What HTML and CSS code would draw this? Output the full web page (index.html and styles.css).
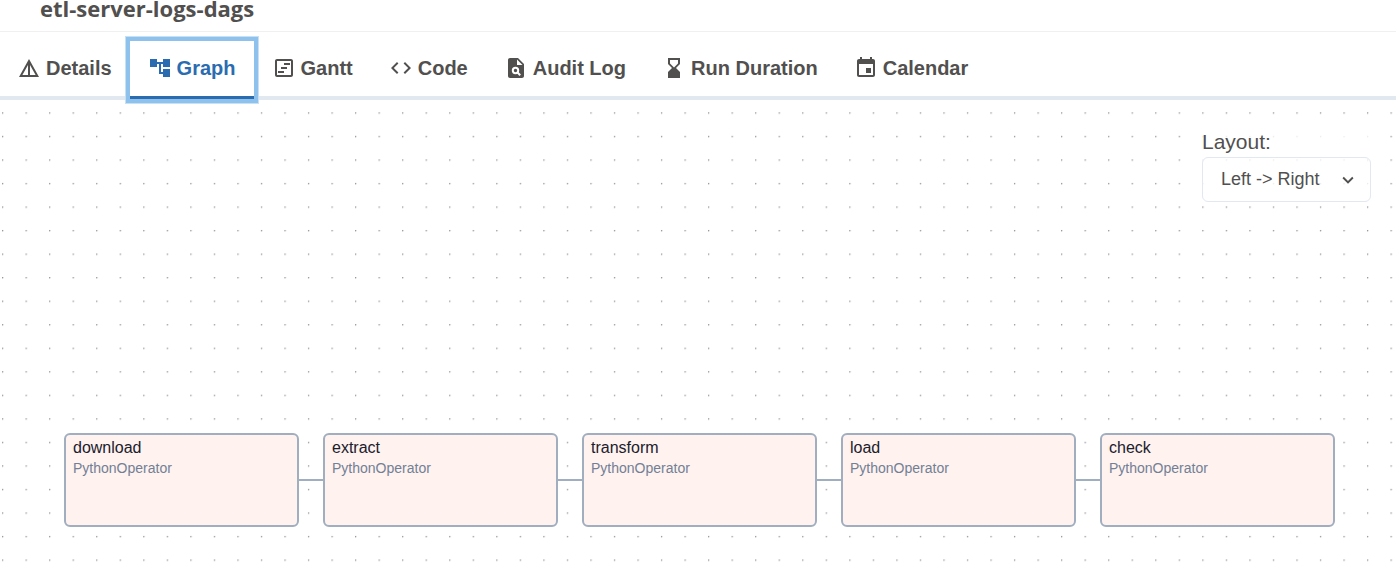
FILE: index.html
```html
<!DOCTYPE html>
<html lang="en">
<head>
<meta charset="utf-8">
<title>etl-server-logs-dags</title>
<meta name="viewport" content="width=device-width, initial-scale=1">
<link rel="stylesheet" href="styles.css">
</head>
<body>
<header class="page-header">
  <h1 class="page-title">etl-server-logs-dags</h1>
</header>
<nav class="tabs" role="tablist" aria-label="DAG views">
  <button class="tab" role="tab" type="button">
    <svg class="icon" viewBox="0 0 24 24" aria-hidden="true"><path d="M12 3 2 21h20L12 3zm1 5.920L18.600 19H13V8.920zm-2 0V19H5.400L11 8.920z"/></svg>
    <span>Details</span>
  </button>
  <button class="tab tab-active" role="tab" type="button" aria-selected="true">
    <svg class="icon" viewBox="0 0 24 24" aria-hidden="true"><path d="M22 11V3h-7v3H9V3H2v8h7V8h2v10h4v3h7v-8h-7v3h-2V8h2v3z"/></svg>
    <span>Graph</span>
  </button>
  <button class="tab" role="tab" type="button">
    <svg class="icon" viewBox="0 0 24 24" aria-hidden="true"><path d="M19 5v14H5V5h14m0-2H5c-1.100 0-2 .9-2 2v14c0 1.100.9 2 2 2h14c1.100 0 2-.9 2-2V5c0-1.100-.9-2-2-2zM12 9h6V7h-6v2zM9 13h6v-2H9v2zM6 17h6v-2H6v2z"/></svg>
    <span>Gantt</span>
  </button>
  <button class="tab" role="tab" type="button">
    <svg class="icon" viewBox="0 0 24 24" aria-hidden="true"><path d="M9.400 16.600 4.800 12l4.600-4.600L8 6l-6 6 6 6 1.400-1.400zm5.200 0 4.600-4.600-4.600-4.600L16 6l6 6-6 6-1.400-1.400z"/></svg>
    <span>Code</span>
  </button>
  <button class="tab" role="tab" type="button">
    <svg class="icon" viewBox="0 0 24 24" aria-hidden="true"><path fill-rule="evenodd" d="M6 2C4.900 2 4 2.900 4 4v16c0 1.100.9 2 2 2h12c1.100 0 2-.9 2-2V8l-6-6H6zm7 1.500L18.500 9H13V3.500z"/><circle cx="11.500" cy="14.500" r="2.700" fill="none" stroke="#fff" stroke-width="2"/><path d="m13.300 16.300 2.900 2.900" stroke="#fff" stroke-width="2"/></svg>
    <span>Audit Log</span>
  </button>
  <button class="tab" role="tab" type="button">
    <svg class="icon" viewBox="0 0 24 24" aria-hidden="true"><path d="m18 22-.010-6L14 12l3.990-4.010L18 2H6v6l4 4-4 3.990V22h12zM8 7.500V4h8v3.500l-4 4-4-4z"/></svg>
    <span>Run Duration</span>
  </button>
  <button class="tab" role="tab" type="button">
    <svg class="icon" viewBox="0 0 24 24" aria-hidden="true"><path d="M17 12h-5v5h5v-5zM16 1v2H8V1H6v2H5c-1.110 0-1.990.9-1.990 2L3 19c0 1.100.890 2 2 2h14c1.100 0 2-.9 2-2V5c0-1.100-.9-2-2-2h-1V1h-2zm3 18H5V8h14v11z"/></svg>
    <span>Calendar</span>
  </button>
</nav>
<main class="graph">
  <svg class="grid" aria-hidden="true">
    <defs>
      <pattern id="dots" width="20" height="20" patternUnits="userSpaceOnUse" patternTransform="translate(2 12.300) scale(1.1767)">
        <circle cx=".6" cy=".6" r=".55" fill="#74747c"/>
      </pattern>
    </defs>
    <rect width="100%" height="100%" fill="url(#dots)"/>
  </svg>
  <form class="layout-panel">
    <label class="layout-label" for="layout">Layout:</label>
    <div class="select-wrap">
      <select class="layout-select" id="layout">
        <option>Left -&gt; Right</option>
        <option>Right -&gt; Left</option>
        <option>Top -&gt; Bottom</option>
        <option>Bottom -&gt; Top</option>
      </select>
      <svg class="chevron" viewBox="0 0 24 24" aria-hidden="true"><path d="M16.590 8.590 12 13.170 7.410 8.590 6 10l6 6 6-6z"/></svg>
    </div>
  </form>
  <ol class="nodes">
    <li class="node"><span class="node-name">download</span><span class="node-type">PythonOperator</span></li>
    <li class="node"><span class="node-name">extract</span><span class="node-type">PythonOperator</span></li>
    <li class="node"><span class="node-name">transform</span><span class="node-type">PythonOperator</span></li>
    <li class="node"><span class="node-name">load</span><span class="node-type">PythonOperator</span></li>
    <li class="node"><span class="node-name">check</span><span class="node-type">PythonOperator</span></li>
  </ol>
</main>
</body>
</html>
```
FILE: styles.css
```css
* {
  box-sizing: border-box;
}

body {
  margin: 0;
  min-height: 100vh;
  display: flex;
  flex-direction: column;
  overflow: hidden;
  background: #fff;
  color: #51504f;
  font-family: "Liberation Sans", Arial, sans-serif;
}

.page-header {
  display: flex;
  align-items: flex-end;
  height: 32px;
  padding: 0 40px 7px;
  border-bottom: 1px solid #f0f0f0;
}

.page-title {
  margin: 0;
  font: 700 22px/32px "Open Sans", "Noto Sans", sans-serif;
}

.tabs {
  display: flex;
  margin-left: -1px;
  padding-top: 9px;
  border-bottom: 4px solid #e2e8f0;
}

.tab {
  display: flex;
  align-items: center;
  gap: 5px;
  height: 58px;
  margin-bottom: -3px;
  padding: 0 18px 2px;
  border: 0;
  border-bottom: 3px solid transparent;
  background: none;
  color: inherit;
  font: 700 20px/24px "Liberation Sans", Arial, sans-serif;
  white-space: nowrap;
}

.tab-active {
  z-index: 1;
  border-bottom-color: #2b6cb0;
  color: #2b6cb0;
  box-shadow: 0 0 0 4px #8ec2ed, 0 0 0 5px #c6e0f6;
}

.icon {
  width: 24px;
  height: 24px;
  fill: currentColor;
}

.graph {
  position: relative;
  flex: 1;
  display: flex;
  flex-direction: column;
  gap: 231px;
  padding: 30px 25px 53px 64px;
}

.grid {
  position: absolute;
  inset: 0;
  width: 100%;
  height: 100%;
}

.layout-panel {
  position: relative;
  align-self: flex-end;
  width: 169px;
  background: rgba(255, 255, 255, 0.8);
}

.layout-label {
  display: block;
  padding-bottom: 3px;
  font-size: 21px;
  line-height: 24px;
}

.select-wrap {
  position: relative;
}

.layout-select {
  display: block;
  width: 100%;
  height: 45px;
  padding: 0 36px 2px 18px;
  border: 1px solid #e2e8f0;
  border-radius: 6px;
  appearance: none;
  background: none;
  color: inherit;
  font: 18px/24px "Liberation Sans", Arial, sans-serif;
}

.chevron {
  position: absolute;
  top: 12px;
  right: 12px;
  width: 22px;
  height: 22px;
  fill: currentColor;
  pointer-events: none;
}

.nodes {
  position: relative;
  display: flex;
  gap: 24px;
  margin: 0;
  padding: 0;
  list-style: none;
}

.node {
  position: relative;
  display: flex;
  flex-direction: column;
  flex: 0 0 235px;
  height: 94px;
  padding: 3px 7px;
  border: 2px solid #a0aec0;
  border-radius: 6px;
  background: #fff2ef;
}

.node + .node::before {
  content: "";
  position: absolute;
  top: 44px;
  right: 100%;
  width: 28px;
  height: 2px;
  background: #a0aec0;
}

.node-name {
  color: #1a202c;
  font-size: 16px;
  line-height: 20px;
}

.node-type {
  color: #718096;
  font-size: 14px;
  line-height: 20px;
}
```
